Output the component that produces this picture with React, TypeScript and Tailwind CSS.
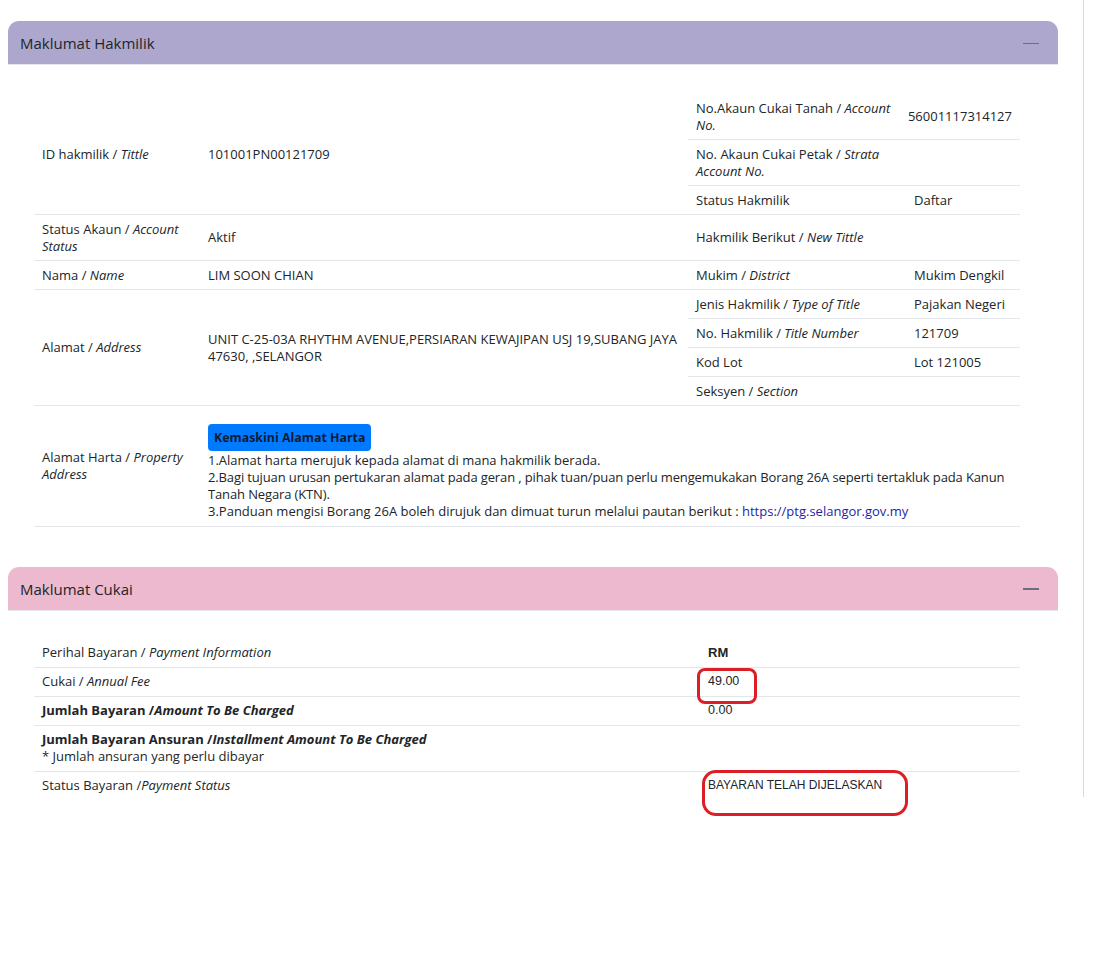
const font = { fontFamily: '"Open Sans", "Noto Sans", sans-serif' }
const arial = { fontFamily: '"Liberation Sans", Arial, sans-serif' }

const Lbl = ({ a, b }: { a: string; b?: string }) => (
  <>
    {a}
    {b && <i>{b}</i>}
  </>
)

const Minus = () => <span className="block w-[16px] h-[1.5px] mt-[2px] bg-[#6c6c7a]" />

function CardHeader({ title, color }: { title: string; color: string }) {
  return (
    <div className={`${color} h-[44px] rounded-t-[11px] flex items-center justify-between pl-[12px] pr-[19px] border-b border-[#e6e6ee]`}>
      <span className="text-[15px] text-[#212529] mt-[2px]">{title}</span>
      <Minus />
    </div>
  )
}

const cell = 'px-2 py-[5.5px] leading-[17px]'
const line = 'border-b border-[#e3e6ea]'

// left pair of cells: label + value, vertically centred
function LeftPair({ label, value }: { label: React.ReactNode; value?: React.ReactNode }) {
  return (
    <div className="w-[654px] flex items-center">
      <div className={`w-[166px] ${cell}`}>{label}</div>
      <div className={`flex-1 ${cell}`}>{value}</div>
    </div>
  )
}

function RightRows({ rows }: { rows: { label: React.ReactNode; value?: string }[] }) {
  return (
    <div className="w-[332px] flex flex-col">
      {rows.map((r, i) => (
        <div key={i} className={`flex items-center flex-1 ${i < rows.length - 1 ? line : ''}`}>
          <div className={`w-[218px] ${cell}`}>{r.label}</div>
          <div className={`flex-1 ${cell}`}>{r.value}</div>
        </div>
      ))}
    </div>
  )
}

export default function App() {
  return (
    <div className="relative w-[1096px] min-h-[975px] bg-white text-[13px] text-[#212529]" style={font}>
      <div className="absolute left-[1083px] top-0 w-px h-[797px] bg-[#d8d8d8]" />
      <div className="pl-[8px] pt-[21px] w-[1058px]">
        {/* Maklumat Hakmilik */}
        <div>
          <CardHeader title="Maklumat Hakmilik" color="bg-[#aea7cd]" />
          <div className="pl-[26px] pr-[38px] pt-[29px]">
            <div className={`flex ${line}`}>
              <LeftPair label={<Lbl a="ID hakmilik / " b="Tittle" />} value="101001PN00121709" />
              <RightRows
                rows={[
                  { label: <Lbl a="No.Akaun Cukai Tanah / " b="Account No." />, value: '56001117314127' },
                  { label: <Lbl a="No. Akaun Cukai Petak / " b="Strata Account No." /> },
                  { label: 'Status Hakmilik', value: 'Daftar' },
                ]}
              />
            </div>
            <div className={`flex ${line}`}>
              <LeftPair label={<Lbl a="Status Akaun / " b="Account Status" />} value="Aktif" />
              <RightRows rows={[{ label: <Lbl a="Hakmilik Berikut / " b="New Tittle" /> }]} />
            </div>
            <div className={`flex ${line}`}>
              <LeftPair label={<Lbl a="Nama / " b="Name" />} value="LIM SOON CHIAN" />
              <RightRows rows={[{ label: <Lbl a="Mukim / " b="District" />, value: 'Mukim Dengkil' }]} />
            </div>
            <div className={`flex ${line}`}>
              <LeftPair
                label={<Lbl a="Alamat / " b="Address" />}
                value="UNIT C-25-03A RHYTHM AVENUE,PERSIARAN KEWAJIPAN USJ 19,SUBANG JAYA 47630, ,SELANGOR"
              />
              <RightRows
                rows={[
                  { label: <Lbl a="Jenis Hakmilik / " b="Type of Title" />, value: 'Pajakan Negeri' },
                  { label: <Lbl a="No. Hakmilik / " b="Title Number" />, value: '121709' },
                  { label: 'Kod Lot', value: 'Lot 121005' },
                  { label: <Lbl a="Seksyen / " b="Section" /> },
                ]}
              />
            </div>
            <div className={`flex items-center ${line}`}>
              <div className={`w-[166px] ${cell}`}>
                <Lbl a="Alamat Harta / " b="Property Address" />
              </div>
              <div className={`flex-1 ${cell} pt-[18px]`}>
                <button className="bg-[#007bff] text-[#0d1b36] text-[12.4px] font-bold px-[6px] h-[27px] rounded-[4px] mb-[1px]">
                  Kemaskini Alamat Harta
                </button>
                <p>1.Alamat harta merujuk kepada alamat di mana hakmilik berada.</p>
                <p className="tracking-[-0.13px]">
                  2.Bagi tujuan urusan pertukaran alamat pada geran , pihak tuan/puan perlu mengemukakan Borang 26A seperti
                  tertakluk pada Kanun Tanah Negara (KTN).
                </p>
                <p>
                  3.Panduan mengisi Borang 26A boleh dirujuk dan dimuat turun melalui pautan berikut :{' '}
                  <a className="text-[#1f1fa6]">https://ptg.selangor.gov.my</a>
                </p>
              </div>
            </div>
          </div>
        </div>

        {/* Maklumat Cukai */}
        <div className="mt-[40px]">
          <CardHeader title="Maklumat Cukai" color="bg-[#edb9cf]" />
          <div className="pl-[26px] pr-[38px] pt-[28px]">
            <div className={`flex items-center ${line}`}>
              <div className={`w-[666px] ${cell} py-[4.5px]`}>
                <Lbl a="Perihal Bayaran / " b="Payment Information" />
              </div>
              <div className={`flex-1 ${cell} font-bold`} style={arial}>
                RM
              </div>
            </div>
            <div className={`flex items-center ${line}`}>
              <div className={`w-[666px] ${cell}`}>
                <Lbl a="Cukai / " b="Annual Fee" />
              </div>
              <div className={`flex-1 ${cell} relative text-[12.5px]`} style={arial}>
                49.00
                <span className="absolute left-[-3px] top-[0px] w-[60px] h-[36px] border-[3px] border-[#dc1f26] rounded-[8px]" />
              </div>
            </div>
            <div className={`flex items-center ${line}`}>
              <div className={`w-[666px] ${cell} font-bold`}>
                Jumlah Bayaran /<i>Amount To Be Charged</i>
              </div>
              <div className={`flex-1 ${cell} text-[12.5px]`} style={arial}>
                0.00
              </div>
            </div>
            <div className={`flex items-center ${line}`}>
              <div className={`w-[666px] ${cell}`}>
                <p className="font-bold">
                  Jumlah Bayaran Ansuran /<i>Installment Amount To Be Charged</i>
                </p>
                <p>* Jumlah ansuran yang perlu dibayar</p>
              </div>
              <div className={`flex-1 ${cell}`} />
            </div>
            <div className="flex items-center">
              <div className={`w-[666px] ${cell}`}>
                Status Bayaran /<i>Payment Status</i>
              </div>
              <div className={`flex-1 ${cell} relative text-[12px]`} style={arial}>
                BAYARAN TELAH DIJELASKAN
                <span className="absolute left-[2px] top-[-2px] w-[206px] h-[46px] border-[3px] border-[#dc1f26] rounded-[14px]" />
              </div>
            </div>
          </div>
        </div>
      </div>
    </div>
  )
}
